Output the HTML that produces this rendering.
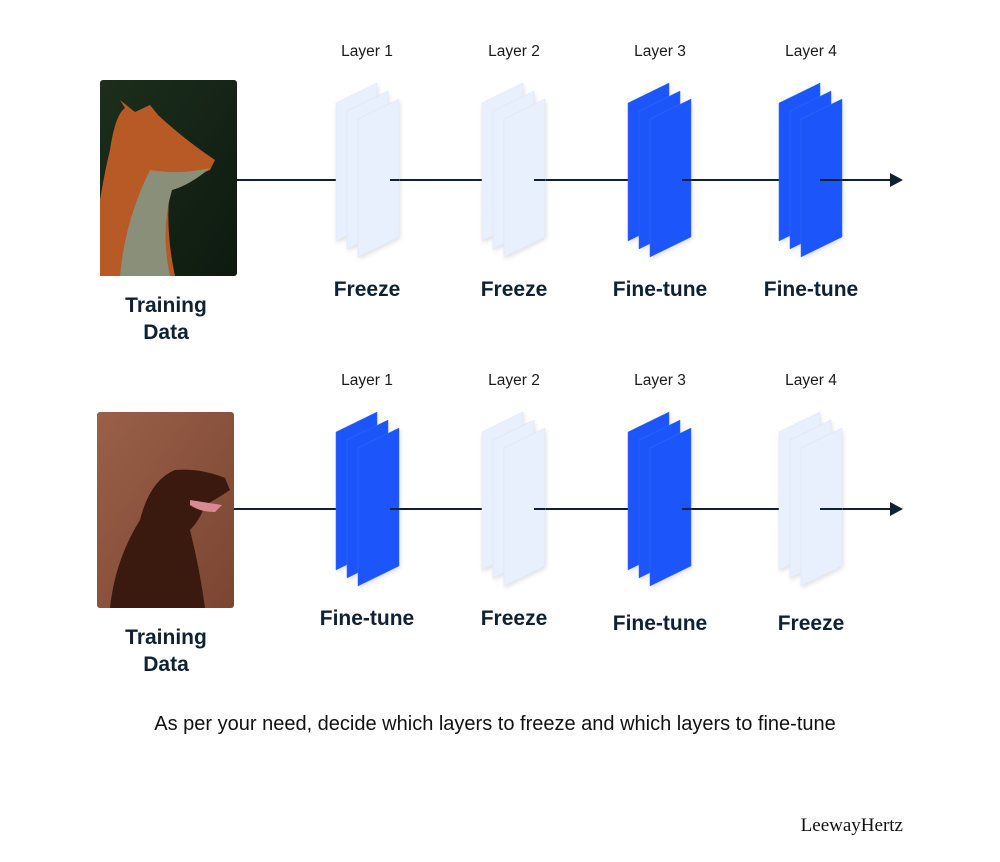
<!DOCTYPE html>
<html><head><style>
body{margin:0;background:#fff;width:1000px;height:862px;position:relative;overflow:hidden;font-family:"Liberation Sans",sans-serif;color:#0f2233}
.t{position:absolute;white-space:nowrap;transform:translateX(-50%)}
.lay{font-size:15.5px;color:#1a1a1a}
.b{font-weight:bold;font-size:21px}
</style></head><body>
<svg width="1000" height="862" style="position:absolute;left:0;top:0">
<defs>
<linearGradient id="fox" x1="0" y1="0" x2="1" y2="1"><stop offset="0" stop-color="#1c2e1c"/><stop offset="1" stop-color="#0e1a10"/></linearGradient>
<linearGradient id="dog" x1="0" y1="0" x2="1" y2="1"><stop offset="0" stop-color="#9a6048"/><stop offset="1" stop-color="#7a4532"/></linearGradient>
<path id="p" d="M0 20 L41 0 L41 138 L0 158Z"/>
<filter id="s2" x="-30%" y="-10%" width="160%" height="130%"><feDropShadow dx="1" dy="2" stdDeviation="2" flood-color="#000" flood-opacity="0.12"/></filter>
</defs>
<rect x="100" y="80" width="137" height="196" rx="3" fill="url(#fox)"/>
<path d="M110 150 Q115 115 125 108 L120 100 L135 112 L150 105 L158 115 Q185 140 215 160 L210 170 Q185 180 170 185 Q165 230 175 276 L100 276 L100 200 Q105 170 110 150Z" fill="#b85a25"/>
<path d="M150 170 Q180 175 210 168 Q190 185 172 190 Q160 230 170 276 L120 276 Q125 220 150 170Z" fill="#8a8f7a"/>
<rect x="97" y="412" width="137" height="196" rx="3" fill="url(#dog)"/>
<path d="M110 608 Q115 560 140 520 Q150 480 175 470 Q200 468 225 478 L230 490 Q215 500 205 505 Q200 520 190 530 Q200 570 205 608Z" fill="#3a1a0e"/>
<path d="M190 500 L222 505 L215 512 Q200 512 190 505Z" fill="#d88a90"/>
<g stroke="#0f2233" stroke-width="2">
<line x1="237" y1="180" x2="336" y2="180"/><line x1="390" y1="180" x2="482" y2="180"/><line x1="534" y1="180" x2="628" y2="180"/><line x1="682" y1="180" x2="779" y2="180"/><line x1="820" y1="180" x2="892" y2="180"/>
<line x1="234" y1="509" x2="336" y2="509"/><line x1="390" y1="509" x2="482" y2="509"/><line x1="534" y1="509" x2="628" y2="509"/><line x1="682" y1="509" x2="779" y2="509"/><line x1="820" y1="509" x2="892" y2="509"/>
</g>
<path d="M890 173 L903 180 L890 187Z" fill="#0f2233"/>
<path d="M890 502 L903 509 L890 516Z" fill="#0f2233"/>
<g filter="url(#s2)">
<g fill="#e8effd" stroke="#dbe3f5" stroke-width="0.5">
<use href="#p" x="336" y="83"/><use href="#p" x="347" y="91"/><use href="#p" x="358" y="99"/>
<use href="#p" x="482" y="83"/><use href="#p" x="493" y="91"/><use href="#p" x="504" y="99"/>
<use href="#p" x="482" y="412"/><use href="#p" x="493" y="420"/><use href="#p" x="504" y="428"/>
<use href="#p" x="779" y="412"/><use href="#p" x="790" y="420"/><use href="#p" x="801" y="428"/>
</g>
<g fill="#1c55fa" stroke="#3a6cff" stroke-width="0.5">
<use href="#p" x="628" y="83"/><use href="#p" x="639" y="91"/><use href="#p" x="650" y="99"/>
<use href="#p" x="779" y="83"/><use href="#p" x="790" y="91"/><use href="#p" x="801" y="99"/>
<use href="#p" x="336" y="412"/><use href="#p" x="347" y="420"/><use href="#p" x="358" y="428"/>
<use href="#p" x="628" y="412"/><use href="#p" x="639" y="420"/><use href="#p" x="650" y="428"/>
</g>
</g>
<g stroke="#0f2233" stroke-width="2">
<line x1="390" y1="180" x2="399" y2="180"/><line x1="534" y1="180" x2="545" y2="180"/><line x1="682" y1="180" x2="691" y2="180"/><line x1="820" y1="180" x2="842" y2="180"/>
<line x1="390" y1="509" x2="399" y2="509"/><line x1="534" y1="509" x2="545" y2="509"/><line x1="682" y1="509" x2="691" y2="509"/><line x1="820" y1="509" x2="842" y2="509"/>
</g>
</svg>
<div class="t lay" style="left:367px;top:43px">Layer 1</div>
<div class="t lay" style="left:514px;top:43px">Layer 2</div>
<div class="t lay" style="left:660px;top:43px">Layer 3</div>
<div class="t lay" style="left:811px;top:43px">Layer 4</div>
<div class="t lay" style="left:367px;top:372px">Layer 1</div>
<div class="t lay" style="left:514px;top:372px">Layer 2</div>
<div class="t lay" style="left:660px;top:372px">Layer 3</div>
<div class="t lay" style="left:811px;top:372px">Layer 4</div>
<div class="t b" style="left:367px;top:278px">Freeze</div>
<div class="t b" style="left:514px;top:278px">Freeze</div>
<div class="t b" style="left:660px;top:278px">Fine-tune</div>
<div class="t b" style="left:811px;top:278px">Fine-tune</div>
<div class="t b" style="left:367px;top:607px">Fine-tune</div>
<div class="t b" style="left:514px;top:607px">Freeze</div>
<div class="t b" style="left:660px;top:612px">Fine-tune</div>
<div class="t b" style="left:811px;top:612px">Freeze</div>
<div class="t b" style="left:166px;top:292px;text-align:center;line-height:27px">Training<br>Data</div>
<div class="t b" style="left:166px;top:624px;text-align:center;line-height:27px">Training<br>Data</div>
<div class="t" style="left:495px;top:713px;font-size:20px;color:#111">As per your need, decide which layers to freeze and which layers to fine-tune</div>
<div style="position:absolute;right:97px;top:815px;font-family:'Liberation Serif',serif;font-size:19px;color:#111">LeewayHertz</div>
</body></html>
